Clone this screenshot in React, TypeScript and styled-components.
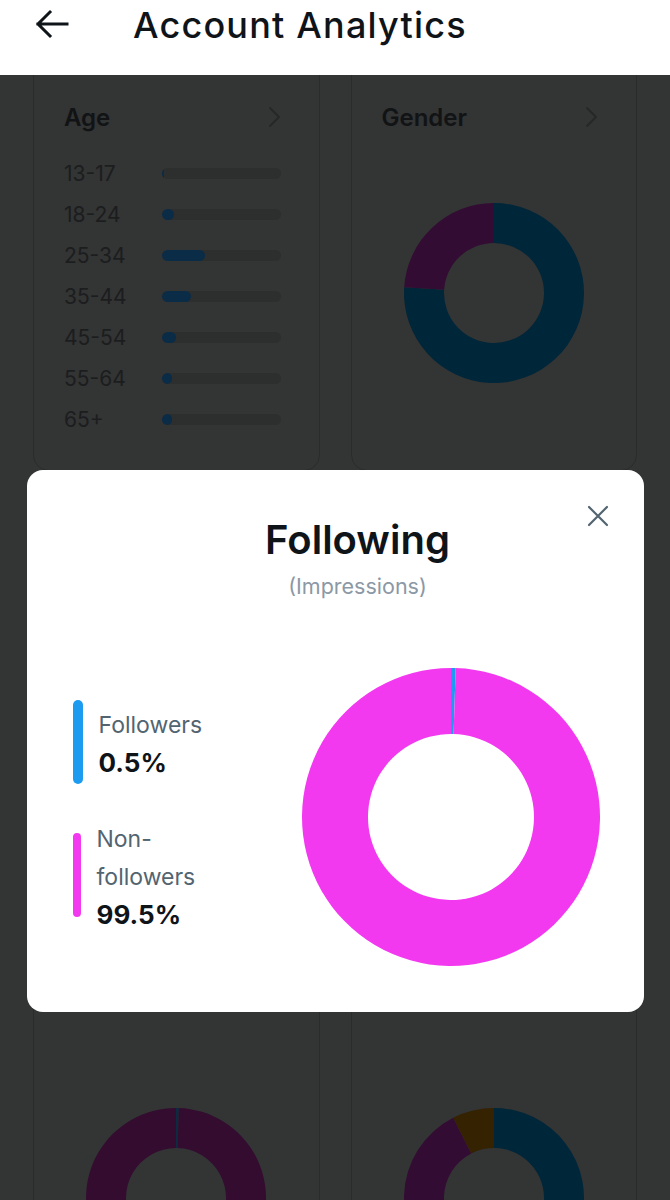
import React from 'react';
import styled, { createGlobalStyle } from 'styled-components';

const GlobalStyle = createGlobalStyle`
  html, body {
    margin: 0;
    padding: 0;
  }
  body {
    background: #333434;
    font-family: Inter, "Noto Sans", sans-serif;
    color: #0f1419;
    overflow: hidden;
  }
  * {
    box-sizing: border-box;
  }
`;

interface Segment {
  value: number;
  color: string;
}

const TAU = Math.PI * 2;

function arcPath(cx: number, cy: number, R: number, r: number, a0: number, a1: number): string {
  const pt = (rad: number, a: number) => `${cx + rad * Math.sin(a)} ${cy - rad * Math.cos(a)}`;
  const large = a1 - a0 > Math.PI ? 1 : 0;
  return [
    `M ${pt(R, a0)}`,
    `A ${R} ${R} 0 ${large} 1 ${pt(R, a1)}`,
    `L ${pt(r, a1)}`,
    `A ${r} ${r} 0 ${large} 0 ${pt(r, a0)}`,
    'Z',
  ].join(' ');
}

function Donut({ size, inner, segments }: { size: number; inner: number; segments: Segment[] }) {
  const total = segments.reduce((s, x) => s + x.value, 0);
  const R = size / 2;
  let acc = 0;
  return (
    <svg width={size} height={size} viewBox={`0 0 ${size} ${size}`}>
      {segments.map((s, i) => {
        const a0 = (acc / total) * TAU;
        acc += s.value;
        const a1 = (acc / total) * TAU;
        return <path key={i} d={arcPath(R, R, R, inner, a0, a1)} fill={s.color} />;
      })}
    </svg>
  );
}

const ages: [string, number][] = [
  ['13-17', 1.5],
  ['18-24', 10],
  ['25-34', 36],
  ['35-44', 24.5],
  ['45-54', 12],
  ['55-64', 8.5],
  ['65+', 8.5],
];

const locations: [string, number][] = [
  ['US', 40],
  ['India', 22],
  ['UK', 12],
  ['Canada', 9],
  ['Japan', 7],
  ['Other', 10],
];

const languages: [string, number][] = [
  ['English', 70],
  ['Spanish', 10],
  ['Hindi', 8],
  ['French', 5],
  ['German', 4],
  ['Other', 3],
];

function ChevronRight() {
  return (
    <svg width="14" height="22" viewBox="0 0 14 22" fill="none">
      <path d="M3 2 L12 11 L3 20" stroke="#262828" strokeWidth="1.8" strokeLinecap="round" strokeLinejoin="round" />
    </svg>
  );
}

function BarList({ rows, labelWidth }: { rows: [string, number][]; labelWidth: number }) {
  return (
    <RowList $label={labelWidth}>
      {rows.map(([label, pct]) => (
        <React.Fragment key={label}>
          <RowLabel>{label}</RowLabel>
          <Track>
            <Fill style={{ width: `${pct}%` }} />
          </Track>
        </React.Fragment>
      ))}
    </RowList>
  );
}

export default function App() {
  return (
    <>
      <GlobalStyle />
      <Screen>
        <TopBar>
          <BackButton aria-label="Back">
            <svg width="34" height="30" viewBox="0 0 34 30" fill="none">
              <path d="M32 15 H3 M15 3 L3 15 L15 27" stroke="#0f1419" strokeWidth="3" strokeLinecap="square" />
            </svg>
          </BackButton>
          <PageTitle>Account Analytics</PageTitle>
        </TopBar>

        <CardGrid>
          <Card>
            <CardHead>
              <CardTitle>Age</CardTitle>
              <ChevronRight />
            </CardHead>
            <BarList rows={ages} labelWidth={98} />
          </Card>
          <Card>
            <CardHead>
              <CardTitle>Gender</CardTitle>
              <ChevronRight />
            </CardHead>
            <ChartArea $pad={50}>
              <Donut
                size={180}
                inner={50}
                segments={[
                  { value: 76, color: '#00263a' },
                  { value: 24, color: '#330c33' },
                ]}
              />
            </ChartArea>
          </Card>

          <Card $minH={397}>
            <CardHead>
              <CardTitle>Location</CardTitle>
              <ChevronRight />
            </CardHead>
            <BarList rows={locations} labelWidth={98} />
          </Card>
          <Card $minH={397}>
            <CardHead>
              <CardTitle>Language</CardTitle>
              <ChevronRight />
            </CardHead>
            <BarList rows={languages} labelWidth={98} />
          </Card>

          <Card $minH={420}>
            <CardHead>
              <CardTitle>Following</CardTitle>
              <ChevronRight />
            </CardHead>
            <ChartArea $pad={80}>
              <Donut
                size={180}
                inner={50}
                segments={[
                  { value: 0.5, color: '#0c2a40' },
                  { value: 99.5, color: '#330c30' },
                ]}
              />
            </ChartArea>
          </Card>
          <Card $minH={420}>
            <CardHead>
              <CardTitle>Verified</CardTitle>
              <ChevronRight />
            </CardHead>
            <ChartArea $pad={80}>
              <Donut
                size={180}
                inner={50}
                segments={[
                  { value: 58.5, color: '#00263a' },
                  { value: 34, color: '#330c33' },
                  { value: 7.5, color: '#352200' },
                ]}
              />
            </ChartArea>
          </Card>
        </CardGrid>
      </Screen>

      <Backdrop>
        <Modal role="dialog" aria-labelledby="following-title">
          <CloseButton aria-label="Close">
            <svg width="22" height="22" viewBox="0 0 22 22" fill="none">
              <path d="M2 2 L20 20 M20 2 L2 20" stroke="#536471" strokeWidth="2.2" strokeLinecap="round" />
            </svg>
          </CloseButton>
          <ModalHead>
            <ModalTitle id="following-title">Following</ModalTitle>
            <ModalSub>(Impressions)</ModalSub>
          </ModalHead>
          <ModalBody>
            <Legend>
              <LegendItem>
                <LegendBar $color="#1d9bf0" $w={10} />
                <LegendText>
                  <LegendLabel>Followers</LegendLabel>
                  <LegendValue>0.5%</LegendValue>
                </LegendText>
              </LegendItem>
              <LegendItem>
                <LegendBar $color="#f339f0" $w={8} />
                <LegendText>
                  <LegendLabel>Non-followers</LegendLabel>
                  <LegendValue>99.5%</LegendValue>
                </LegendText>
              </LegendItem>
            </Legend>
            <Donut
              size={298}
              inner={83}
              segments={[
                { value: 0.5, color: '#1d9bf0' },
                { value: 99.5, color: '#f339f0' },
              ]}
            />
          </ModalBody>
        </Modal>
      </Backdrop>
    </>
  );
}

const Screen = styled.div`
  min-height: 100vh;
`;

const TopBar = styled.header`
  position: relative;
  z-index: 2;
  height: 75px;
  background: #ffffff;
  display: flex;
  align-items: flex-start;
  padding: 1px 0 0 35px;
`;

const BackButton = styled.button`
  border: 0;
  background: none;
  padding: 0;
  margin-top: 8px;
  width: 34px;
  height: 30px;
  display: flex;
`;

const PageTitle = styled.h1`
  margin: 0 0 0 64px;
  font-size: 36px;
  line-height: 48px;
  font-weight: 500;
  letter-spacing: 1.2px;
  color: #0f1419;
`;

const CardGrid = styled.main`
  display: grid;
  grid-template-columns: 1fr 1fr;
  gap: 31px;
  padding: 0 33px;
  margin-top: -20px;
`;

const Card = styled.section<{ $minH?: number }>`
  border: 1px solid #2a2b2b;
  border-radius: 16px;
  padding: 45px 30px 30px 30px;
  display: flex;
  flex-direction: column;
  min-height: ${(p) => (p.$minH ? `${p.$minH}px` : 'auto')};
`;

const CardHead = styled.div`
  display: flex;
  align-items: center;
  justify-content: space-between;
  height: 32px;
  margin-bottom: 20px;
  padding-right: 8px;
`;

const CardTitle = styled.h2`
  margin: 0;
  font-size: 24px;
  font-weight: 600;
  color: #111314;
`;

const RowList = styled.div<{ $label: number }>`
  display: grid;
  grid-template-columns: ${(p) => p.$label}px 1fr;
  grid-auto-rows: 41px;
  align-items: center;
  padding-right: 8px;
`;

const RowLabel = styled.span`
  font-size: 21px;
  color: #1c1d1e;
  white-space: nowrap;
`;

const Track = styled.div`
  height: 11px;
  border-radius: 6px;
  background: #2d2e2e;
  overflow: hidden;
`;

const Fill = styled.div`
  height: 100%;
  border-radius: 6px;
  background: #0a2c47;
`;

const ChartArea = styled.div<{ $pad: number }>`
  display: flex;
  justify-content: center;
  padding-top: ${(p) => p.$pad}px;
`;

const Backdrop = styled.div`
  position: fixed;
  inset: 0;
  z-index: 5;
  display: flex;
  justify-content: center;
  align-items: flex-start;
  padding-top: 470px;
`;

const Modal = styled.div`
  position: relative;
  width: 617px;
  background: #ffffff;
  border-radius: 16px;
  padding: 46px 44px 46px 46px;
`;

const CloseButton = styled.button`
  position: absolute;
  top: 35px;
  right: 35px;
  border: 0;
  background: none;
  padding: 0;
  width: 22px;
  height: 22px;
  display: flex;
`;

const ModalHead = styled.div`
  display: flex;
  flex-direction: column;
  align-items: center;
  padding-left: 43px;
`;

const ModalTitle = styled.h2`
  margin: 0;
  font-size: 40px;
  line-height: 48px;
  font-weight: 600;
  color: #0f1419;
`;

const ModalSub = styled.span`
  margin-top: 7px;
  font-size: 21.5px;
  line-height: 30px;
  color: #8b98a5;
`;

const ModalBody = styled.div`
  margin-top: 67px;
  display: flex;
  align-items: center;
  justify-content: space-between;
`;

const Legend = styled.div`
  display: flex;
  flex-direction: column;
  gap: 32px;
`;

const LegendItem = styled.div`
  display: flex;
  align-items: center;
  gap: 16px;
`;

const LegendBar = styled.span<{ $color: string; $w: number }>`
  flex: none;
  width: ${(p) => p.$w}px;
  height: 84px;
  border-radius: ${(p) => p.$w / 2}px;
  background: ${(p) => p.$color};
`;

const LegendText = styled.div`
  width: 120px;
  display: flex;
  flex-direction: column;
  padding-top: 4px;
`;

const LegendLabel = styled.span`
  font-size: 23px;
  line-height: 38px;
  color: #536471;
`;

const LegendValue = styled.span`
  font-size: 26px;
  line-height: 38px;
  font-weight: 700;
  color: #0f1419;
`;
